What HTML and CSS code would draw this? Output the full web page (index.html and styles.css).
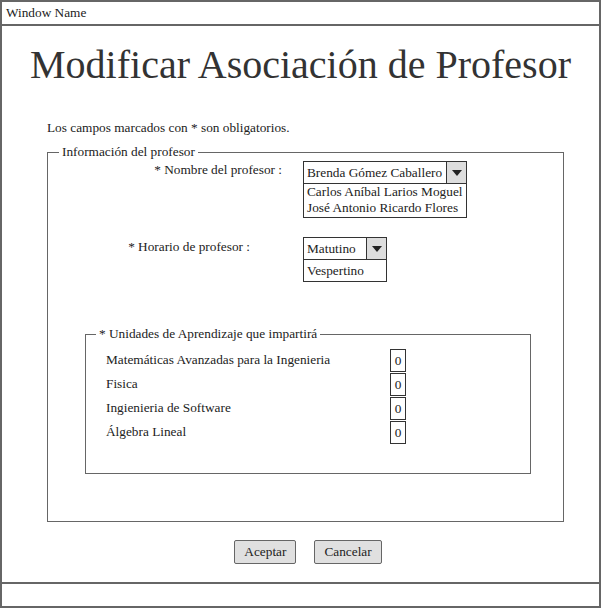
FILE: index.html
```html
<!DOCTYPE html>
<html lang="es">
<head>
  <meta charset="UTF-8" />
  <title>Modificar Asociación de Profesor</title>
  <link rel="stylesheet" href="styles.css">
</head>
<body>

<div class="window">
  <div class="title-bar">Window Name</div>

  <div class="content">
    <h1>Modificar Asociación de Profesor</h1>
    <p class="note">Los campos marcados con * son obligatorios.</p>

    <fieldset class="group outer">
      <legend>Información del profesor</legend>

      <div class="field field-nombre">
        <label class="field-label">* Nombre del profesor :</label>
        <div class="select select-wide">
          <div class="select-head">
            <span class="select-value">Brenda Gómez Caballero</span>
            <span class="select-btn"><span class="arrow"></span></span>
          </div>
          <div class="select-list">
            <div>Carlos Aníbal Larios Moguel</div>
            <div>José Antonio Ricardo Flores</div>
          </div>
        </div>
      </div>

      <div class="field field-horario">
        <label class="field-label">* Horario de profesor :</label>
        <div class="select select-narrow">
          <div class="select-head">
            <span class="select-value">Matutino</span>
            <span class="select-btn"><span class="arrow"></span></span>
          </div>
          <div class="select-list">
            <div>Vespertino</div>
          </div>
        </div>
      </div>

      <fieldset class="group inner">
        <legend>* Unidades de Aprendizaje que impartirá</legend>
        <div class="unit"><span>Matemáticas Avanzadas para la Ingenieria</span><span class="count">0</span></div>
        <div class="unit"><span>Fisica</span><span class="count">0</span></div>
        <div class="unit"><span>Ingienieria de Software</span><span class="count">0</span></div>
        <div class="unit"><span>Álgebra Lineal</span><span class="count">0</span></div>
      </fieldset>
    </fieldset>

    <div class="actions">
      <button class="btn">Aceptar</button>
      <button class="btn">Cancelar</button>
    </div>
  </div>

  <div class="status-bar"></div>
</div>

</body>
</html>
```

FILE: styles.css
```css
html, body {
  margin: 0;
  padding: 0;
  background: #ffffff;
  font-family: 'Liberation Serif', 'Times New Roman', serif;
  font-size: 13.3px;
  color: #222;
}

.window {
  box-sizing: border-box;
  width: 601px;
  height: 608px;
  border: 2px solid #666;
  display: flex;
  flex-direction: column;
}

.title-bar {
  height: 22px;
  line-height: 22px;
  padding-left: 4px;
  border-bottom: 2px solid #666;
}

.content {
  flex: 1;
  padding: 0 35px 0 45px;
}

h1 {
  margin: 14px -35px 0 -45px;
  text-align: center;
  white-space: nowrap;
  font-weight: normal;
  font-size: 40px;
  line-height: 50px;
  color: #333;
}

.note {
  margin: 30px 0 0 0;
  line-height: 16px;
}

.group {
  border: 1px solid #666;
  margin: 0;
  padding: 0;
}

.group legend {
  padding: 0 3px;
  margin-left: 11px;
  line-height: 16px;
}

.outer {
  margin-top: 8px;
  height: 378px;
  box-sizing: border-box;
}

.field {
  display: flex;
  align-items: flex-start;
}

.field-label {
  text-align: right;
  line-height: 20px;
}

.field-nombre .field-label {
  width: 234px;
  margin-right: 21px;
}

.field-nombre .select {
  margin-top: 1px;
}

.field-horario {
  margin-top: 19px;
}

.field-horario .field-label {
  width: 202px;
  margin-right: 53px;
}

.select {
  border: 1px solid #333;
  background: #fff;
}

.select-wide {
  width: 162px;
}

.select-narrow {
  width: 82px;
}

.select-head {
  display: flex;
  height: 21px;
  border-bottom: 1px solid #333;
}

.select-value {
  flex: 1;
  padding-left: 3px;
  line-height: 21px;
  white-space: nowrap;
}

.select-btn {
  width: 19px;
  border-left: 1px solid #333;
  background: #ddd;
  display: flex;
  align-items: center;
  justify-content: center;
}

.arrow {
  width: 0;
  height: 0;
  border-left: 5px solid transparent;
  border-right: 5px solid transparent;
  border-top: 6px solid #222;
}

.select-list {
  padding: 0 3px 1px;
  line-height: 16px;
}

.select-narrow .select-list {
  line-height: 21px;
  padding-bottom: 0;
}

.inner {
  margin: 44px 32px 0 37px;
  height: 148px;
  box-sizing: border-box;
  padding: 6px 124px 0 0;
}

.inner legend {
  margin-left: 10px;
}

.unit {
  display: flex;
  justify-content: space-between;
  align-items: center;
  height: 24px;
  margin-left: 20px;
}

.count {
  box-sizing: border-box;
  width: 16px;
  height: 23px;
  border: 1px solid #333;
  text-align: center;
  line-height: 21px;
}

.actions {
  display: flex;
  justify-content: center;
  gap: 18px;
  margin-top: 18px;
  margin-left: 5px;
}

.btn {
  font-family: 'Liberation Serif', 'Times New Roman', serif;
  font-size: 13.3px;
  color: #222;
  background: #e0e0e0;
  border: 1px solid #666;
  border-radius: 2px;
  height: 24px;
  padding: 0 9px;
}

.status-bar {
  height: 22px;
  border-top: 2px solid #666;
}
```
